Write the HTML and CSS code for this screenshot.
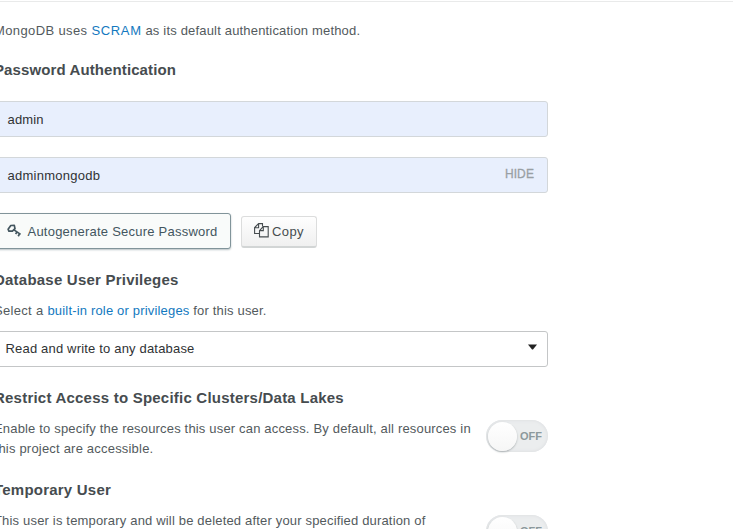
FILE: index.html
```html
<!DOCTYPE html>
<html lang="en">
<head>
<meta charset="utf-8">
<title>Add Database User</title>
<link rel="stylesheet" href="styles.css">
</head>
<body>
<main class="panel">
  <form class="form">
    <p class="text intro"><span class="lead">MongoDB uses </span><a class="link scram">SCRAM</a> as its default authentication method.</p>
    <h2 class="heading password-heading">Password Authentication</h2>
    <div class="field"><span class="field-name">admin</span></div>
    <div class="field"><span class="field-password">adminmongodb</span><span class="hide">HIDE</span></div>
    <div class="actions">
      <div class="button generate">
        <svg class="key" viewBox="0 0 15 14" width="15" height="14"><g fill="none" stroke="currentColor" stroke-width="1.7" stroke-linejoin="round"><path d="M1.1 5.2 3.8 1.5 7.3 1.4 8 4.6 5.4 7.2 1.9 7.1Z"/><path d="M6.6 5.6 13.6 10.4M10 8 8.6 10M12.6 9.8 11.2 12.2"/></g></svg>
        <span class="generate-label">Autogenerate Secure Password</span>
      </div>
      <div class="button copy">
        <svg class="copy-icon" viewBox="0 0 15 15" width="15" height="15"><g fill="none" stroke="currentColor" stroke-width="1.1"><path d="M5 10.5H.6V4.6L4.6.6H8.5V3.5M.6 4.7H4.6V.6"/><path d="M5.5 7.6 9.2 3.6H14.2V13.9H5.5ZM5.5 7.6H9.3V3.6"/></g></svg>
        <span class="copy-label">Copy</span>
      </div>
    </div>
    <h2 class="heading privileges-heading">Database User Privileges</h2>
    <p class="text select-text"><span class="select-lead">Select a </span><a class="link">built-in role or privileges</a> for this user.</p>
    <div class="select"><span class="select-value">Read and write to any database</span><svg class="caret" viewBox="0 0 9 6" width="9" height="6"><path d="M0 .5H9L5 5.5H4Z" fill="currentColor"/></svg></div>
    <h2 class="heading restrict-heading">Restrict Access to Specific Clusters/Data Lakes</h2>
    <div class="option">
      <p class="text"><span class="line">Enable to specify the resources this user can access. By default, all resources in</span><span class="line second-line">this project are accessible.</span></p>
      <div class="toggle"><span class="knob"></span><span class="off">OFF</span></div>
    </div>
    <h2 class="heading temporary-heading">Temporary User</h2>
    <div class="option temporary">
      <p class="text"><span class="line">This user is temporary and will be deleted after your specified duration of</span></p>
      <div class="toggle"><span class="knob"></span><span class="off">OFF</span></div>
    </div>
  </form>
</main>
</body>
</html>
```
FILE: styles.css
```css
* { box-sizing: border-box; }
body { margin: 0; height: 529px; overflow: hidden; background: #fff; color: #535a5d; font: 13px/20px "Liberation Sans", sans-serif; }
.panel { width: 733px; margin-top: 1px; border-top: 1px solid #e9eaea; }
.form { width: 554px; margin-left: -6px; padding-top: 19px; }
.text { margin: 0; letter-spacing: .175px; }
.intro { letter-spacing: .18px; }
.lead { letter-spacing: .38px; }
.scram { letter-spacing: .65px; }
.select-lead { letter-spacing: .32px; }
.second-line { padding-left: .6px; letter-spacing: .2px; }
.link { color: #1379c0; }
.heading { margin: 20px 0 10px; font-size: 15px; line-height: 20px; font-weight: 700; letter-spacing: .22px; color: #464c4f; }
.password-heading { margin: 19px 0 21px; letter-spacing: .11px; }
.field, .select { display: flex; align-items: center; justify-content: space-between; height: 36px; border: 1px solid #d3d7da; border-radius: 3px; padding: 0 13px 0 12px; background: #e8effd; color: #303234; }
.field-name, .field-password { padding: 2px 0 0 .5px; letter-spacing: .15px; }
.field-password { letter-spacing: .27px; }
.field + .field { margin-top: 20px; }
.hide { padding-bottom: 2px; font-size: 12px; letter-spacing: .1px; color: #999fa4; -webkit-text-stroke: .3px #999fa4; }
.actions { display: flex; align-items: center; gap: 10px; margin-top: 20px; height: 37px; }
.button { display: flex; align-items: center; border-radius: 3px; }
.generate { width: 237px; height: 36px; margin-bottom: 1px; padding-left: 11.5px; gap: 6px; border: 1px solid #81949a; background: #f9fbfa; color: #43565f; box-shadow: 0 1px 2px #b8c1c4; }
.generate-label { padding-top: 2px; letter-spacing: .23px; }
.copy { width: 76px; height: 32px; padding-left: 12px; gap: 3px; border: 1px solid #dcdddd; border-bottom: 2px solid #d2d5d5; background: linear-gradient(#fefefe, #f0f0f0); color: #464c4f; }
.copy-label { padding-top: 1px; letter-spacing: .4px; }
.copy-icon { margin-bottom: 1px; }
.select { background: #fff; border-color: #c4c6c7; padding: 0 10.5px; }
.select-value { letter-spacing: .18px; }
.caret { margin-bottom: 4px; color: #222; }
.privileges-heading { margin: 20px 0 11px; }
.select-text + .select { margin-top: 10px; }
.restrict-heading { margin: 21px 0 11px; }
.option { display: flex; justify-content: space-between; }
.line { display: block; white-space: nowrap; }
.toggle { display: flex; align-items: center; width: 62px; height: 32px; margin-top: 1px; border-radius: 16px; padding-left: 1.5px; background: #ebedee; box-shadow: inset 0 0 3px 1px #e0e2e4; }
.knob { width: 29px; height: 29px; border-radius: 50%; background: linear-gradient(#fff, #f6f6f6); box-shadow: 0 1px 2px #a9afb1; }
.off { margin-left: 3.5px; font-size: 11px; font-weight: 700; color: #8c999c; }
.temporary-heading { margin: 21px 0 11px; }
.temporary .toggle { margin-top: 4px; }
```
